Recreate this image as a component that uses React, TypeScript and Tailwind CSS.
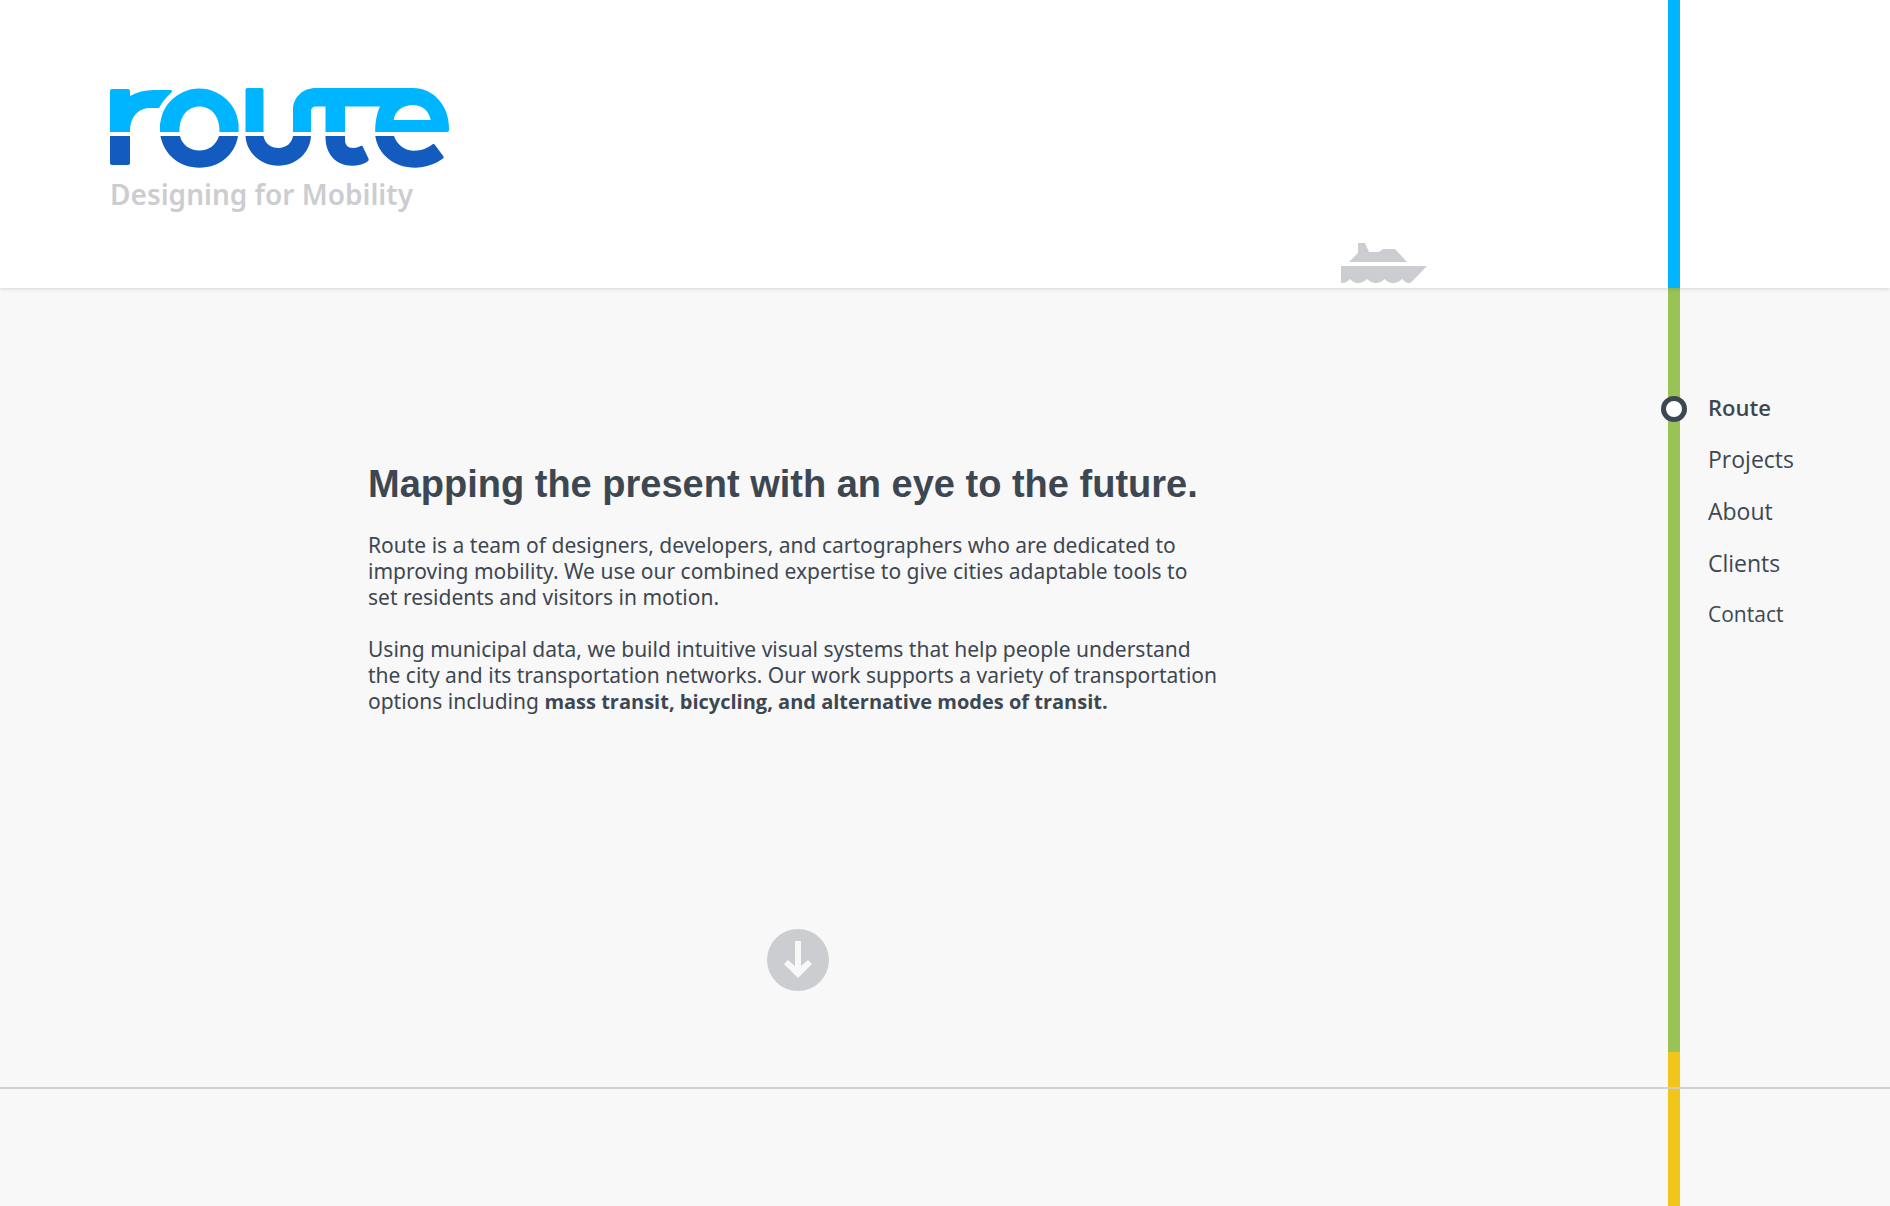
import React from 'react';
import { clsx } from 'clsx';

interface NavItem {
  label: string;
  href: string;
  className: string;
}

const navItems: NavItem[] = [
  { label: 'Route', href: '#route', className: 'text-[22px] font-semibold' },
  { label: 'Projects', href: '#projects', className: 'text-[23px]' },
  { label: 'About', href: '#about', className: 'text-[23px]' },
  { label: 'Clients', href: '#clients', className: 'text-[23px]' },
  { label: 'Contact', href: '#contact', className: 'text-[21px]' },
];

function Logo() {
  return (
    <svg width="340" height="80" viewBox="0 0 340 80" role="img" aria-label="Route">
      <g fill="#00b5ff" fillRule="evenodd">
        <path d="M0 44V3Q0 1 2 1H18Q20 1 20 3V8Q30 2 44 2H61Q63 3 61 5Q54 11 49 20H40C28 20 20 29 20 44Z" />
        <path d="M50 44A39.5 39.5 0 1 1 128.600 44H109.500C110 28 101 18.500 89.500 18.500C78 18.500 69 28 69.500 44Z" />
        <path d="M135.500 44V2Q135.500 0 137.500 0H151.500Q153.500 0 153.500 2V44Z" />
        <path d="M183 44V22C183 9 193 0 206 0H303C323 0 339 17 339 40V42Q339 44 337 44H265.200C265 34 267 25 270 18.500H235V44H215.500V18.500H206Q201 18.500 201 23.500V44ZM283.700 32H320.700C319 22 311 17 303 17C294 17 285 22 283.700 32Z" />
      </g>
      <g fill="#135bbf">
        <path d="M0 48H20V75Q20 77 18 77H2Q0 77 0 75Z" />
        <path d="M50.500 48H70C72 57 80 62.500 89.500 62.500C99 62.500 106 57 109 48H128C125 67 109 79.700 89.500 79.700C70 79.700 54 67 50.500 48Z" />
        <path d="M135.500 48H153.500C155 56 161 60 168.500 60C176 60 182 55 183 48H201C200 65 186 77.700 168.500 77.700C151 77.700 136.500 65 135.500 48Z" />
        <path d="M215.500 48H235V52C235 57 238 60 243 60C247 60 249 59 251 57.800L252.500 58L258.700 71Q259 72.500 257.500 73.500C253 76.500 248 77.700 242 77.700C226 77.700 215 66 215.500 48Z" />
        <path d="M265.300 48H284C287 57 295 62.700 304 62.700C312 62.700 317 60.500 322.500 56.300Q324 55.500 325 57L333.500 68.500Q334 69.700 333 70.500C325 76.500 315 79.700 305 79.700C285 79.700 268 67 265.300 48Z" />
      </g>
    </svg>
  );
}

function Ferry() {
  return (
    <svg width="86" height="41" viewBox="0 0 86 41" fill="#cccdd1" aria-hidden="true">
      <path d="M8 19L17 10V0H24L28 9H38L42 6H54L66 19Z" />
      <path d="M0 23H86L69.500 40C66 40.500 64 39 61 36C56 41.500 48 41.500 43.500 36C39 41.500 31 41.500 26 36C21 41.500 13 41.500 9 36C6 39 4 40 0 40Z" />
    </svg>
  );
}

function Header() {
  return (
    <header className="relative z-10 flex h-72 bg-white shadow-[0_0_5px_rgba(0,0,0,0.2)]">
      <div className="flex flex-1 justify-between pr-[241px] pl-[110px]">
        <a href="#route" className="pt-[88px]">
          <Logo />
          <p className="mt-1.5 font-['Noto_Sans',sans-serif] text-[28px] leading-10 font-semibold text-[#cccdd1]">
            Designing for Mobility
          </p>
        </a>
        <div className="flex items-end pb-1">
          <Ferry />
        </div>
      </div>
      <div className="w-3 bg-[#00b5ff]" />
      <div className="w-[210px]" />
    </header>
  );
}

function SideNav() {
  return (
    <nav className="w-[210px] pt-[93px] pl-7">
      <ul>
        {navItems.map((item, index) => (
          <li key={item.label} className="relative flex h-[52px] items-center">
            {/* Station marker on the line */}
            {index === 0 && (
              <span className="absolute top-[15px] -left-[47px] size-[26px] rounded-full border-5 border-[#3d4752] bg-white" />
            )}
            <a href={item.href} className={clsx('hover:underline', item.className)}>
              {item.label}
            </a>
          </li>
        ))}
      </ul>
    </nav>
  );
}

export default function App() {
  return (
    <div className="flex min-h-screen flex-col bg-[#f8f8f8] font-['Open_Sans',sans-serif] text-[#3d4752]">
      <Header />
      <main className="flex flex-1 flex-col">
        <div className="flex">
          <section id="route" className="flex flex-1 flex-col items-center pt-[172px] pr-[72px] pb-[98px]">
            <div className="w-[860px]">
              <h1 className="font-['Liberation_Sans',sans-serif] text-[38px] leading-12 font-bold">
                Mapping the present with an eye to the future.
              </h1>
              <p className="mt-6 font-['Noto_Sans',sans-serif] text-[21px] leading-[26px]">
                Route is a team of designers, developers, and cartographers who are dedicated to
                <br />
                improving mobility. We use our combined expertise to give cities adaptable tools to
                <br />
                set residents and visitors in motion.
              </p>
              <p className="mt-[26px] font-['Noto_Sans',sans-serif] text-[21px] leading-[26px]">
                Using municipal data, we build intuitive visual systems that help people understand
                <br />
                the city and its transportation networks. Our work supports a variety of transportation
                <br />
                options including{' '}
                <strong className="font-['Open_Sans',sans-serif] text-[20px]">
                  mass transit, bicycling, and alternative modes of transit.
                </strong>
              </p>
            </div>
            <button type="button" aria-label="Scroll to projects" className="mt-[214px] cursor-pointer">
              <svg width="62" height="62" viewBox="0 0 62 62">
                <circle cx="31" cy="31" r="31" fill="#cccdd1" />
                <path d="M28 12H34V37L41 31L45 35L31 49L17 35L21 31L28 37Z" fill="#f8f8f8" />
              </svg>
            </button>
          </section>
          <div className="flex w-3 flex-col">
            <div className="flex-1 bg-[#99c355]" />
            <div className="h-[37px] bg-[#f1c519]" />
          </div>
          <SideNav />
        </div>
        <section id="projects" className="relative flex flex-1 shadow-[0_-2px_0_rgba(204,205,209,0.9)]">
          <div className="flex-1" />
          <div className="w-3 bg-[#f1c519]" />
          <div className="w-[210px]" />
        </section>
      </main>
    </div>
  );
}
